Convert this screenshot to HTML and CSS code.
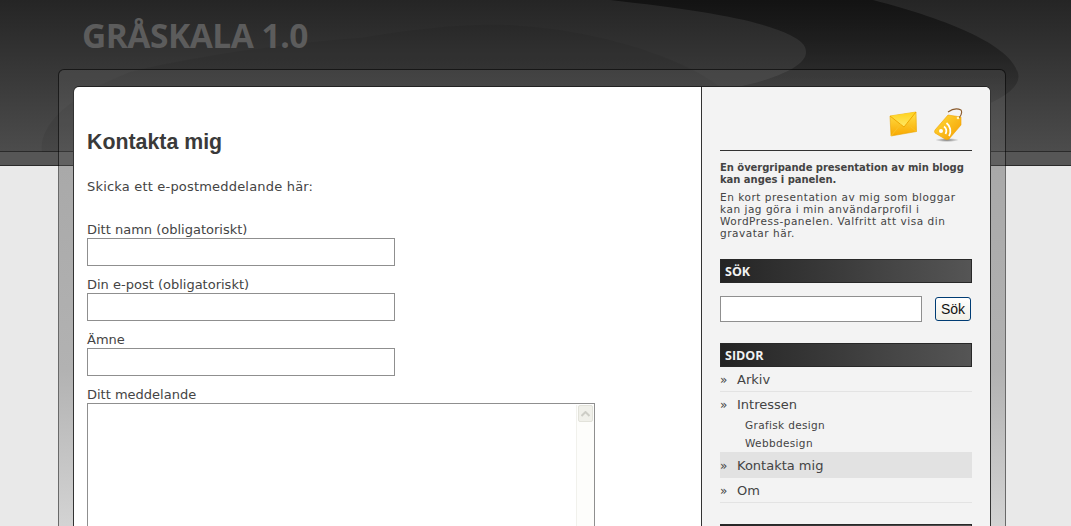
FILE: index.html
```html
<!DOCTYPE html>
<html lang="sv">
<head>
<meta charset="utf-8">
<title>Gråskala 1.0</title>
<link rel="stylesheet" href="styles.css">
</head>
<body>
<svg class="swoosh" width="1071" height="152" viewBox="0 0 1071 152" aria-hidden="true">
  <defs>
    <linearGradient id="dark" x1="0" y1="0" x2="0" y2="1">
      <stop offset="0" stop-color="#000" stop-opacity=".5"/>
      <stop offset="1" stop-color="#000" stop-opacity=".1"/>
    </linearGradient>
  </defs>
  <path d="M42 152 C38 125 70 95 130 72 C200 55 300 42 360 38 C420 28 480 22 520 26 C590 30 680 55 720 87 L700 152 Z" fill="#000" opacity=".06"/>
  <path d="M610 0 L873 0 C950 20 1010 45 1018 73 C1022 88 1000 100 970 112 L737 112 L737 87 C770 80 806 68 806 52 C806 45 800 40 790 35 C760 20 700 10 610 0 Z" fill="url(#dark)"/>
</svg>
<header class="site-header">
  <h1 class="logo">GRÅSKALA 1.0</h1>
</header>
<div class="wrapper">
  <div class="inner">
    <main class="content">
      <h2 class="page-title">Kontakta mig</h2>
      <p class="intro">Skicka ett e-postmeddelande här:</p>
      <form class="contact">
        <label class="field">Ditt namn (obligatoriskt)<input class="text-input" type="text"></label>
        <label class="field">Din e-post (obligatoriskt)<input class="text-input" type="text"></label>
        <label class="field">Ämne<input class="text-input" type="text"></label>
        <label class="field">Ditt meddelande
          <span class="textarea">
            <span class="scrollbar"><span class="scroll-up"><svg width="9" height="6" viewBox="0 0 9 6"><path d="M0.5 5 L4.5 1 L8.5 5" fill="none" stroke="#cdcdc6" stroke-width="2"/></svg></span></span>
          </span>
        </label>
      </form>
    </main>
    <aside class="sidebar">
      <div class="feeds">
        <svg class="icon-mail" width="28" height="26" viewBox="0 0 28 26" aria-label="E-post">
          <defs>
            <linearGradient id="m1" x1="0" y1="0" x2="0" y2="1"><stop offset="0" stop-color="#ffe14a"/><stop offset="1" stop-color="#f9a800"/></linearGradient>
            <linearGradient id="m2" x1="0" y1="0" x2="0" y2="1"><stop offset="0" stop-color="#ffd21c"/><stop offset="1" stop-color="#ffe866"/></linearGradient>
          </defs>
          <path d="M1 5 L27 1 L27.500 20.500 L2 25 Z" fill="url(#m1)" stroke="#e9a600" stroke-width=".6"/>
          <path d="M1 5 L15 16 L27 1 Z" fill="url(#m2)"/>
          <path d="M1 5 L15 16 L27 1" fill="none" stroke="#f0a800" stroke-width="1"/>
          <path d="M2 25 L11.500 13.500 M27.500 20.500 L17.500 12.500" fill="none" stroke="#f7c22a" stroke-width="1"/>
        </svg>
        <svg class="icon-tag" width="32" height="36" viewBox="0 0 32 36" aria-label="RSS">
          <defs>
            <linearGradient id="t1" x1="0" y1="0" x2="1" y2="1"><stop offset="0" stop-color="#ffdd3a"/><stop offset="1" stop-color="#f59c00"/></linearGradient>
            <radialGradient id="t2"><stop offset="0" stop-color="#444" stop-opacity=".7"/><stop offset="1" stop-color="#444" stop-opacity="0"/></radialGradient>
          </defs>
          <ellipse cx="15" cy="33" rx="12" ry="2" fill="url(#t2)"/>
          <path d="M3 23 L16 8 L29 10 L29 18 L17 32 Q15 33.500 13 32 L3 26 Q2 24.500 3 23 Z" fill="url(#t1)" stroke="#f2a200" stroke-width=".6"/>
          <path d="M16 5 Q23 0 29 3 Q31 6 27 11" fill="none" stroke="#8a5a2c" stroke-width="1.100"/>
          <circle cx="26" cy="11" r="1.300" fill="#fff3b8"/>
          <circle cx="9" cy="24" r="2" fill="#fff"/>
          <path d="M12 19.500 A5.500 5.500 0 0 1 13.500 27" fill="none" stroke="#fff" stroke-width="1.800"/>
          <path d="M14.500 16 A10 10 0 0 1 17 29" fill="none" stroke="#fff" stroke-width="1.800"/>
        </svg>
      </div>
      <section class="about">
        <h4 class="about-title">En övergripande presentation av min blogg kan anges i panelen.</h4>
        <p class="about-text">En kort presentation av mig som bloggar kan jag göra i min användarprofil i WordPress-panelen. Valfritt att visa din gravatar här.</p>
      </section>
      <h3 class="widget-title">SÖK</h3>
      <form class="search">
        <input class="search-input" type="text">
        <button class="search-button" type="button">Sök</button>
      </form>
      <h3 class="widget-title">SIDOR</h3>
      <ul class="pages">
        <li class="page-item">Arkiv</li>
        <li class="page-item has-children">Intressen
          <ul class="subpages">
            <li>Grafisk design</li>
            <li>Webbdesign</li>
          </ul>
        </li>
        <li class="page-item current">Kontakta mig</li>
        <li class="page-item">Om</li>
      </ul>
      <h3 class="widget-title">&nbsp;</h3>
    </aside>
  </div>
</div>
</body>
</html>
```
FILE: styles.css
```css
html, body {
  height: 526px;
  overflow: hidden;
}
body {
  margin: 0;
  position: relative;
  color: #444;
  font-family: "DejaVu Sans", Verdana, sans-serif;
  background-color: #e9e9e9;
  background-image:
    linear-gradient(#252525, #4c4c4c),
    linear-gradient(#2a2a2a, #2a2a2a),
    linear-gradient(#565656, #565656),
    linear-gradient(#2a2a2a, #2a2a2a);
  background-repeat: no-repeat;
  background-size: 100% 151px, 100% 1px, 100% 13px, 100% 1px;
  background-position: 0 0, 0 151px, 0 152px, 0 165px;
}
.swoosh {
  position: absolute;
  top: 0;
  left: 0;
}
.site-header {
  position: relative;
  height: 69px;
  padding-left: 82px;
  box-sizing: border-box;
}
.logo {
  margin: 0;
  padding-top: 12px;
  font: 700 33.500px/46px "Open Sans", sans-serif;
  letter-spacing: -.5px;
  color: #5c5c5c;
}
.wrapper {
  position: relative;
  width: 948px;
  margin-left: 58px;
  box-sizing: border-box;
  padding: 17px 15px 0;
  height: 700px;
  border: 1px solid rgba(0, 0, 0, .55);
  border-bottom: 0;
  border-radius: 6px 6px 0 0;
  background-clip: padding-box;
  background-image: linear-gradient(
    rgba(255,255,255,.07) 96px,
    #a9a9a9 96px,
    #b2b2b2 300px,
    #d2d2d2 450px,
    #e0e0e0 520px
  );
}
.inner {
  display: flex;
  height: 700px;
  background: #fff;
  border-radius: 5px 5px 0 0;
  box-shadow: -1px 0 0 #333, 1px 0 0 #333, 0 -1px 0 #222;
  overflow: hidden;
}
.content {
  width: 627px;
  flex: none;
  padding: 43px 0 0 13px;
  box-sizing: border-box;
}
.page-title {
  margin: 0;
  font: 700 21.330px/25px "Liberation Sans", Arial, sans-serif;
  color: #3a3a3a;
}
.intro {
  margin: 24px 0 0;
  font-size: 13px;
  line-height: 16px;
  letter-spacing: .19px;
}
.contact {
  margin-top: 26px;
}
.field {
  display: block;
  font-size: 13px;
  line-height: 17px;
  margin-bottom: 10px;
}
.text-input {
  display: block;
  width: 308px;
  height: 28px;
  box-sizing: border-box;
  margin: 0;
  border: 1px solid #8f8f8f;
  background: #fff;
}
.textarea {
  display: flex;
  justify-content: flex-end;
  width: 508px;
  height: 300px;
  box-sizing: border-box;
  border: 1px solid #8f8f8f;
  background: #fff;
}
.scrollbar {
  width: 17px;
  background: #fdfdfb;
  border-left: 1px solid #f1f1ec;
  margin-top: 1px;
}
.scroll-up {
  display: flex;
  align-items: center;
  justify-content: center;
  height: 15px;
  margin: 0 1px;
  background: #f0f0ea;
  border: 1px solid #e2e2da;
  border-radius: 2px;
}
.sidebar {
  flex: 1;
  min-width: 0;
  padding: 0 18px;
  background: #f3f3f3;
  border-left: 1px solid #333;
}
.feeds {
  display: flex;
  justify-content: flex-end;
  align-items: flex-start;
  gap: 15px;
  height: 64px;
  padding: 20px 8px 0 0;
  box-sizing: border-box;
  border-bottom: 1px solid #333;
}
.icon-mail {
  margin-top: 4px;
}
.about {
  padding-top: 11px;
  height: 108px;
  box-sizing: border-box;
  font-size: 10.500px;
  line-height: 12px;
}
.about-title {
  margin: 0 0 5px;
  font-size: 10px;
  line-height: 12px;
  letter-spacing: -.04px;
}
.about-text {
  margin: 0;
  letter-spacing: .53px;
}
.widget-title {
  margin: 0;
  height: 24px;
  padding-left: 4px;
  box-sizing: border-box;
  font: 700 12.500px/24px "Open Sans", sans-serif;
  color: #f2f2f2;
  border: 1px solid #282828;
  background: linear-gradient(90deg, #242424, #555);
}
.search {
  display: flex;
  justify-content: space-between;
  align-items: flex-start;
  height: 60px;
  box-sizing: border-box;
  padding: 13px 1px 0 0;
}
.search-input {
  width: 202px;
  height: 26px;
  box-sizing: border-box;
  margin: 0;
  border: 1px solid #8f8f8f;
  background: #fff;
}
.search-button {
  width: 36px;
  height: 24px;
  margin-top: 1px;
  padding: 0;
  font: 14px/20px "Liberation Sans", Arial, sans-serif;
  color: #111;
  background: linear-gradient(#fff, #f0efe6);
  border: 1px solid #003c74;
  border-radius: 3px;
}
.pages {
  list-style: none;
  margin: 0 0 21px;
  padding: 0;
}
.page-item {
  position: relative;
  padding: 5px 0 3px 17px;
  font-size: 13px;
  line-height: 16px;
  border-bottom: 1px solid #e3e3e3;
}
.page-item::before {
  content: "»";
  position: absolute;
  left: 0;
  font-size: 12px;
}
.has-children {
  border-bottom: 0;
  padding-bottom: 0;
}
.current {
  background: #e2e2e2;
  padding: 6px 0 4px 17px;
  border-bottom: 0;
}
.subpages {
  list-style: none;
  margin: 3px 0 0;
  padding: 0 0 0 8px;
  font-size: 10.500px;
  line-height: 18px;
  letter-spacing: .35px;
}
```
